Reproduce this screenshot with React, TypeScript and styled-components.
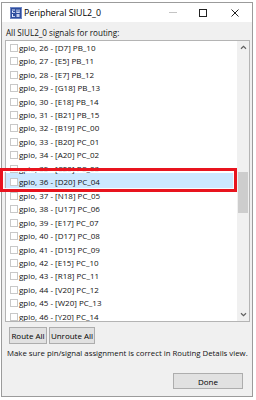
import React from 'react';
import styled, { createGlobalStyle } from 'styled-components';

const colors = {
  frame: '#9b9b9b',
  face: '#f0f0f0',
  white: '#ffffff',
  text: '#111111',
  listBorder: '#b4b4b4',
  selection: '#cce8ff',
  button: '#e1e1e1',
  buttonBorder: '#adadad',
  thumb: '#cdcdcd',
  annotation: '#e8141e',
};

const ROW_HEIGHT = 13.46;

type Signal = { gpio: number; pad: string; port: string };

const signals: Signal[] = [
  { gpio: 26, pad: 'D7', port: 'PB_10' },
  { gpio: 27, pad: 'E5', port: 'PB_11' },
  { gpio: 28, pad: 'E7', port: 'PB_12' },
  { gpio: 29, pad: 'G18', port: 'PB_13' },
  { gpio: 30, pad: 'E18', port: 'PB_14' },
  { gpio: 31, pad: 'B21', port: 'PB_15' },
  { gpio: 32, pad: 'B19', port: 'PC_00' },
  { gpio: 33, pad: 'B20', port: 'PC_01' },
  { gpio: 34, pad: 'A20', port: 'PC_02' },
  { gpio: 35, pad: 'C20', port: 'PC_03' },
  { gpio: 36, pad: 'D20', port: 'PC_04' },
  { gpio: 37, pad: 'N18', port: 'PC_05' },
  { gpio: 38, pad: 'U17', port: 'PC_06' },
  { gpio: 39, pad: 'E17', port: 'PC_07' },
  { gpio: 40, pad: 'D17', port: 'PC_08' },
  { gpio: 41, pad: 'D15', port: 'PC_09' },
  { gpio: 42, pad: 'E15', port: 'PC_10' },
  { gpio: 43, pad: 'R18', port: 'PC_11' },
  { gpio: 44, pad: 'V20', port: 'PC_12' },
  { gpio: 45, pad: 'W20', port: 'PC_13' },
  { gpio: 46, pad: 'Y20', port: 'PC_14' },
];

const SELECTED = 36;

const GlobalStyle = createGlobalStyle`
  html, body {
    margin: 0;
    padding: 0;
    background: ${colors.white};
  }
  body {
    font-family: "Segoe UI", "Open Sans", "Noto Sans", sans-serif;
    color: ${colors.text};
  }
`;

const AppIcon = () => (
  <svg width="12" height="12" viewBox="0 0 12 12">
    <rect x="0" y="0" width="12" height="12" fill="#2f4e9e" />
    <rect x="0.5" y="0.5" width="11" height="11" fill="none" stroke="#6f86c4" strokeWidth="1" />
    <g fill="#e6ecff">
      <rect x="2" y="2.5" width="3" height="1" />
      <rect x="2" y="4" width="1" height="1" />
      <rect x="2" y="5" width="3" height="0.8" />
      <rect x="6.5" y="2.5" width="1" height="3.3" />
      <rect x="8.5" y="2.5" width="1" height="3.3" />
      <rect x="6.5" y="5" width="3" height="0.8" />
      <rect x="2" y="7" width="1" height="3" />
      <rect x="2" y="9.2" width="3" height="0.8" />
      <rect x="6.5" y="7" width="3" height="0.8" />
      <rect x="6.5" y="8.2" width="3" height="0.8" />
      <rect x="6.5" y="9.2" width="3" height="0.8" />
    </g>
  </svg>
);

const Chevron = ({ down }: { down?: boolean }) => (
  <svg width="7" height="5" viewBox="0 0 7 5">
    <path
      d={down ? 'M1 1.2 L3.5 3.6 L6 1.2' : 'M1 3.8 L3.5 1.4 L6 3.8'}
      fill="none"
      stroke="#606060"
      strokeWidth="1.2"
    />
  </svg>
);

export default function App() {
  return (
    <Page>
      <GlobalStyle />
      <Window>
        <TitleBar>
          <TitleIcon>
            <AppIcon />
          </TitleIcon>
          <Title>Peripheral SIUL2_0</Title>
          <Controls>
            <ControlButton>
              <MinimizeGlyph />
            </ControlButton>
            <ControlButton>
              <MaximizeGlyph />
            </ControlButton>
            <ControlButton wide>
              <svg width="8" height="8" viewBox="0 0 8 8">
                <path d="M0.5 0.5 L7.5 7.5 M7.5 0.5 L0.5 7.5" stroke="#222" strokeWidth="1" />
              </svg>
            </ControlButton>
          </Controls>
        </TitleBar>
        <Body>
          <Label>All SIUL2_0 signals for routing:</Label>
          <ListBox>
            <Rows>
              {signals.map(s => (
                <Row key={s.gpio} selected={s.gpio === SELECTED}>
                  <CheckBox />
                  <RowText>
                    gpio, {s.gpio} - [{s.pad}] {s.port}
                  </RowText>
                </Row>
              ))}
            </Rows>
            <ScrollBar>
              <ArrowCell>
                <Chevron />
              </ArrowCell>
              <Track>
                <Thumb offset={119} size={41} />
              </Track>
              <ArrowCell bottom>
                <Chevron down />
              </ArrowCell>
            </ScrollBar>
          </ListBox>
          <Buttons>
            <PushButton width={38}>Route All</PushButton>
            <PushButton width={46}>Unroute All</PushButton>
          </Buttons>
          <Message>Make sure pin/signal assignment is correct in Routing Details view.</Message>
          <Footer>
            <PushButton width={70} tall>
              Done
            </PushButton>
          </Footer>
        </Body>
      </Window>
      <Annotation />
    </Page>
  );
}

const Page = styled.div`
  position: relative;
  padding: 2px 0 0 1px;
  width: 256px;
  height: 400px;
  box-sizing: border-box;
  overflow: hidden;
`;

const Window = styled.div`
  width: 252px;
  height: 395px;
  box-sizing: border-box;
  border: 1px solid ${colors.frame};
  background: ${colors.face};
  display: flex;
  flex-direction: column;
`;

const TitleBar = styled.div`
  height: 19px;
  flex-shrink: 0;
  background: ${colors.white};
  display: flex;
  align-items: center;
`;

const TitleIcon = styled.div`
  width: 12px;
  height: 12px;
  margin-left: 8px;
  display: flex;
`;

const Title = styled.div`
  margin-left: 2px;
  font-size: 8.8px;
  line-height: 12px;
  color: #000;
`;

const Controls = styled.div`
  margin-left: auto;
  display: flex;
  height: 100%;
`;

const ControlButton = styled.div<{ wide?: boolean }>`
  width: ${props => (props.wide ? 34 : 30)}px;
  height: 100%;
  display: flex;
  align-items: center;
  justify-content: center;
`;

const MinimizeGlyph = styled.div`
  width: 8px;
  height: 1px;
  background: #c4c4c4;
`;

const MaximizeGlyph = styled.div`
  width: 8px;
  height: 8px;
  box-sizing: border-box;
  border: 1px solid #222;
`;

const Body = styled.div`
  flex: 1;
  display: flex;
  flex-direction: column;
  padding: 0 2px 0 3px;
`;

const Label = styled.div`
  height: 18px;
  box-sizing: border-box;
  padding: 5px 0 1px 1px;
  font-size: 8.1px;
  line-height: 12px;
`;

const ListBox = styled.div`
  height: 282px;
  box-sizing: border-box;
  border: 1px solid ${colors.listBorder};
  background: ${colors.white};
  display: flex;
`;

const Rows = styled.div`
  flex: 1;
  position: relative;
  z-index: 0;
  overflow: hidden;
`;

const Row = styled.div<{ selected?: boolean }>`
  height: ${ROW_HEIGHT}px;
  display: flex;
  align-items: center;
  position: relative;
  &::before {
    content: '';
    display: ${props => (props.selected ? 'block' : 'none')};
    position: absolute;
    left: 0;
    right: 2px;
    top: -2.4px;
    bottom: -1px;
    background: ${colors.selection};
    z-index: -1;
  }
`;

const CheckBox = styled.div`
  width: 8px;
  height: 8px;
  box-sizing: border-box;
  margin-left: 4px;
  border: 1px solid #c8c8c8;
  background: ${colors.white};
  flex-shrink: 0;
`;

const RowText = styled.span`
  margin-left: 1px;
  font-size: 8px;
  line-height: 12px;
  white-space: nowrap;
`;

const ScrollBar = styled.div`
  width: 12px;
  flex-shrink: 0;
  background: ${colors.face};
  display: flex;
  flex-direction: column;
`;

const ArrowCell = styled.div<{ bottom?: boolean }>`
  height: ${props => (props.bottom ? 14 : 12)}px;
  flex-shrink: 0;
  display: flex;
  align-items: center;
  justify-content: center;
`;

const Track = styled.div`
  flex: 1;
  display: flex;
  flex-direction: column;
`;

const Thumb = styled.div<{ offset: number; size: number }>`
  margin: ${props => props.offset}px 1px 0;
  height: ${props => props.size}px;
  background: ${colors.thumb};
`;

const Buttons = styled.div`
  display: flex;
  gap: 2px;
  margin-top: 5px;
  padding-left: 4px;
`;

const PushButton = styled.div<{ width: number; tall?: boolean }>`
  width: ${props => props.width}px;
  height: ${props => (props.tall ? 16 : 17)}px;
  box-sizing: border-box;
  border: 1px solid ${colors.buttonBorder};
  background: ${colors.button};
  display: flex;
  align-items: center;
  justify-content: center;
  font-size: 8px;
  color: #000;
  white-space: nowrap;
`;

const Message = styled.div`
  margin-top: 3px;
  padding-left: 2px;
  font-size: 7.8px;
  line-height: 12px;
  white-space: nowrap;
`;

const Footer = styled.div`
  display: flex;
  justify-content: flex-end;
  margin-top: 14px;
  padding-right: 7px;
`;

const Annotation = styled.div`
  position: absolute;
  left: 0;
  top: 168px;
  width: 237px;
  height: 24px;
  box-sizing: border-box;
  border: 3px solid ${colors.annotation};
  box-shadow: inset 0 0 0 1px rgba(255, 255, 255, 0.85);
  pointer-events: none;
`;
